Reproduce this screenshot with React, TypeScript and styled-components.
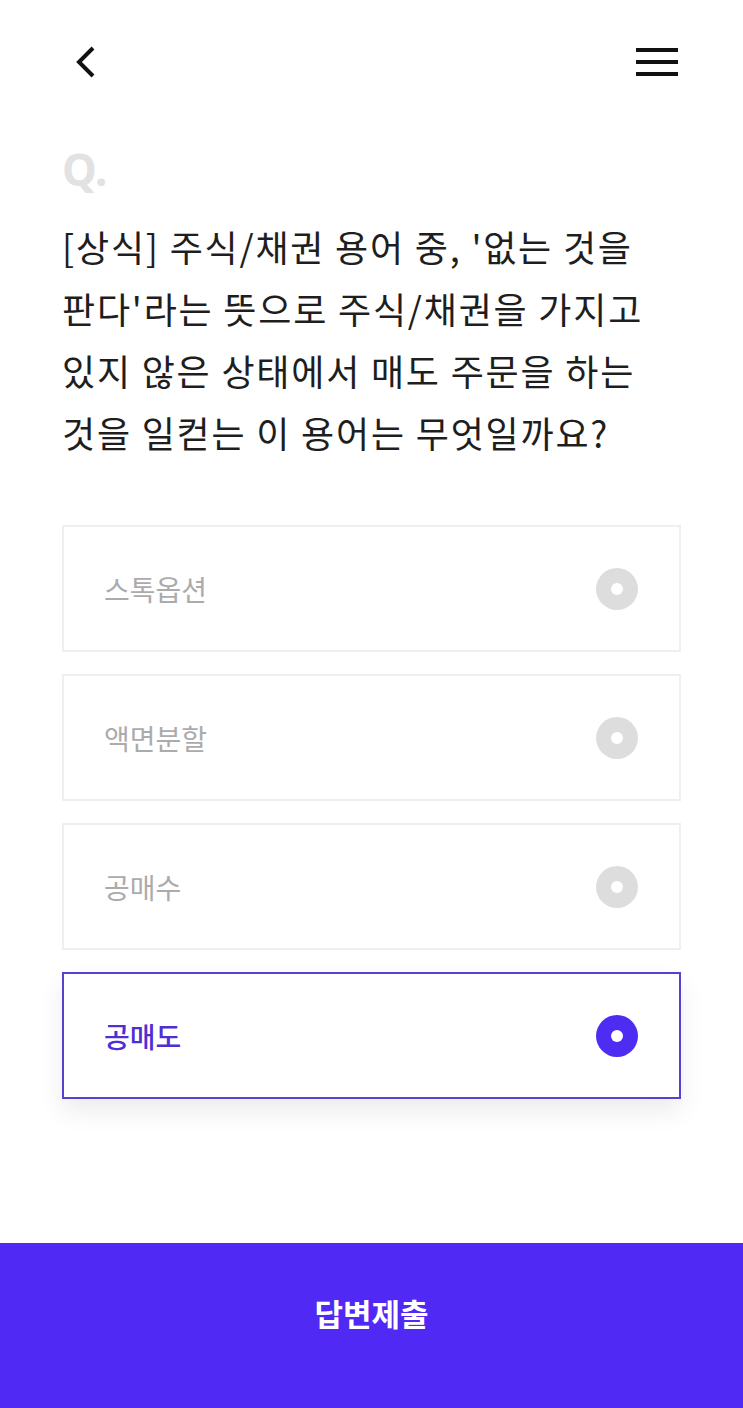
import React, { useState } from "react";
import styled, { createGlobalStyle } from "styled-components";

const GlobalStyle = createGlobalStyle`
  html, body {
    margin: 0;
    padding: 0;
    background: #ffffff;
  }
  body {
    font-family: "Noto Sans CJK KR", "Noto Sans", sans-serif;
  }
`;

const Page = styled.div`
  display: flex;
  flex-direction: column;
  min-height: 1408px;
  background: #fff;
`;

const Header = styled.div`
  display: flex;
  justify-content: space-between;
  align-items: center;
  height: 62px;
  padding: 31px 64px 0 64px;
`;

const IconButton = styled.button`
  display: flex;
  align-items: center;
  justify-content: center;
  background: none;
  border: none;
  padding: 0;
  width: 44px;
  height: 44px;
  cursor: pointer;
`;

const Content = styled.div`
  padding: 52px 62px 0 62px;
`;

const QMark = styled.div`
  font-family: "Noto Sans", "Liberation Sans", sans-serif;
  font-size: 44px;
  font-weight: 700;
  color: #e2e2e2;
  line-height: 48px;
  height: 48px;
`;

const Question = styled.p`
  margin: 22px 0 0 0;
  font-size: 36px;
  line-height: 62px;
  font-weight: 400;
  color: #1e1e1e;
  letter-spacing: 1.8px;
  word-break: keep-all;
`;

const Options = styled.div`
  display: flex;
  flex-direction: column;
  gap: 22px;
  margin-top: 62px;
`;

const Option = styled.div<{ $selected: boolean }>`
  display: flex;
  align-items: center;
  justify-content: space-between;
  height: 123px;
  padding: 0 41px 0 40px;
  border: 2px solid ${(p) => (p.$selected ? "#5a3fd0" : "#efefef")};
  background: #fff;
  box-shadow: ${(p) => (p.$selected ? "0 12px 24px rgba(0,0,0,0.08)" : "none")};
  cursor: pointer;
`;

const OptionLabel = styled.span<{ $selected: boolean }>`
  font-size: 28px;
  font-weight: ${(p) => (p.$selected ? 500 : 400)};
  color: ${(p) => (p.$selected ? "#4e2fd6" : "#ababab")};
`;

const Radio = styled.span<{ $selected: boolean }>`
  display: flex;
  align-items: center;
  justify-content: center;
  width: 42px;
  height: 42px;
  border-radius: 50%;
  background: ${(p) => (p.$selected ? "#4f2cf2" : "#dddddd")};
  &::after {
    content: "";
    width: 12px;
    height: 12px;
    border-radius: 50%;
    background: #fff;
  }
`;

const SubmitBar = styled.button`
  margin-top: auto;
  height: 165px;
  width: 100%;
  padding: 0 0 26px 0;
  border: none;
  background: #5029f5;
  color: #fff;
  font-family: "Noto Sans CJK KR", sans-serif;
  font-size: 31px;
  font-weight: 700;
  cursor: pointer;
`;

const choices = ["스톡옵션", "액면분할", "공매수", "공매도"];

const App: React.FC = () => {
  const [picked, setPicked] = useState(3);

  return (
    <Page>
      <GlobalStyle />
      <Header>
        <IconButton aria-label="back">
          <svg width="24" height="34" viewBox="0 0 24 34">
            <path d="M19 3 L5 17 L19 31" fill="none" stroke="#111" strokeWidth="4" strokeLinecap="butt" />
          </svg>
        </IconButton>
        <IconButton aria-label="menu">
          <svg width="42" height="30" viewBox="0 0 42 30">
            <rect x="0" y="1" width="42" height="4" fill="#111" />
            <rect x="0" y="13" width="42" height="4" fill="#111" />
            <rect x="0" y="25" width="42" height="4" fill="#111" />
          </svg>
        </IconButton>
      </Header>
      <Content>
        <QMark>Q.</QMark>
        <Question>
          [상식] 주식/채권 용어 중, '없는 것을 판다'라는 뜻으로 주식/채권을 가지고 있지 않은 상태에서 매도 주문을 하는 것을 일컫는 이 용어는 무엇일까요?
        </Question>
        <Options>
          {choices.map((c, i) => (
            <Option key={c} $selected={picked === i} onClick={() => setPicked(i)}>
              <OptionLabel $selected={picked === i}>{c}</OptionLabel>
              <Radio $selected={picked === i} />
            </Option>
          ))}
        </Options>
      </Content>
      <SubmitBar>답변제출</SubmitBar>
    </Page>
  );
};

export default App;
